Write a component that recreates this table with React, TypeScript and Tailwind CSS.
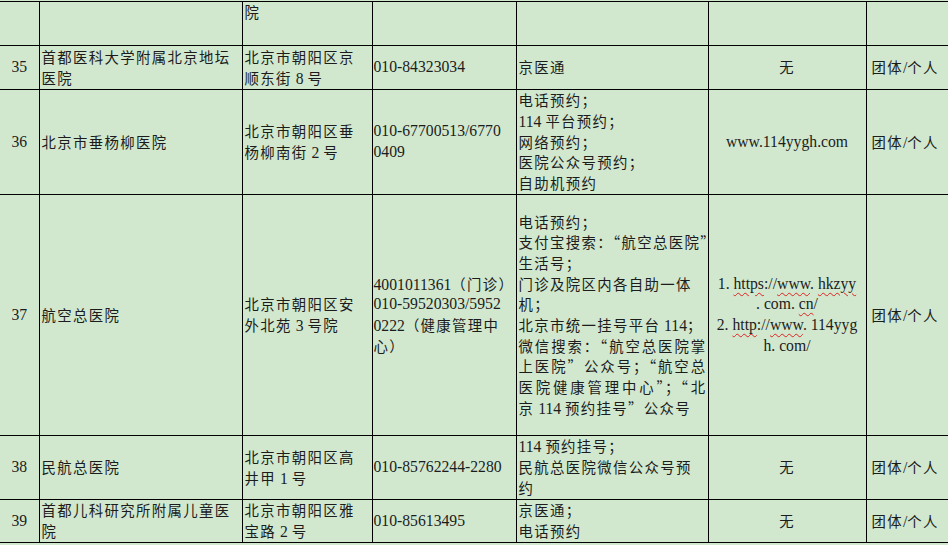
import React from 'react';

// CJK runs get their own font size + tracking so the glyph advance matches the doc (~15.75px)
const CJK = /([\u2E80-\u9FFF\u3000-\u303F\uFF00-\uFFEF\u2018-\u201D]+)/;

function T({ s }: { s: string }) {
  return (
    <>
      {s.split(CJK).map((p, i) =>
        CJK.test(p) ? (
          <span key={i} className="font-['Noto_Sans_CJK_SC',sans-serif] text-[14.4px] tracking-[1.35px]">
            {p}
          </span>
        ) : (
          <React.Fragment key={i}>{p}</React.Fragment>
        )
      )}
    </>
  );
}

function Line({ children, justify = false }: { children: React.ReactNode; justify?: boolean }) {
  return (
    <div className={justify ? 'h-[20.7px] whitespace-nowrap [text-align-last:justify]' : 'h-[20.7px] whitespace-nowrap'}>
      {children}
    </div>
  );
}

function Lines({ lines, justify = [] }: { lines: string[]; justify?: number[] }) {
  return (
    <>
      {lines.map((l, i) => (
        <Line key={i} justify={justify.includes(i)}>
          <T s={l} />
        </Line>
      ))}
    </>
  );
}

function Wavy({ children }: { children: React.ReactNode }) {
  return <span className="underline decoration-wavy decoration-[#e02020] decoration-1 underline-offset-[3px]">{children}</span>;
}

const td = 'border border-black align-middle p-0';

const rows = [
  {
    no: '35',
    name: ['首都医科大学附属北京地坛', '医院'],
    addr: ['北京市朝阳区京', '顺东街 8 号'],
    tel: ['010-84323034'],
    way: ['京医通'],
    web: '无',
    h: 'h-[44px]',
  },
  {
    no: '36',
    name: ['北京市垂杨柳医院'],
    addr: ['北京市朝阳区垂', '杨柳南街 2 号'],
    tel: ['010-67700513/6770', '0409'],
    way: ['电话预约；', '114 平台预约；', '网络预约；', '医院公众号预约；', '自助机预约'],
    web: 'www.114yygh.com',
    h: 'h-[105px]',
  },
];

const rowsB = [
  {
    no: '38',
    name: ['民航总医院'],
    addr: ['北京市朝阳区高', '井甲 1 号'],
    tel: ['010-85762244-2280'],
    way: ['114 预约挂号；', '民航总医院微信公众号预', '约'],
    web: '无',
    h: 'h-[64px]',
  },
  {
    no: '39',
    name: ['首都儿科研究所附属儿童医', '院'],
    addr: ['北京市朝阳区雅', '宝路 2 号'],
    tel: ['010-85613495'],
    way: ['京医通；', '电话预约'],
    web: '无',
    h: 'h-[43px]',
  },
];

type Row = (typeof rows)[number];

function PlainRow({ r }: { r: Row }) {
  return (
    <tr className={r.h}>
      <td className={`${td} border-l-0 text-center`}>
        <Line>{r.no}</Line>
      </td>
      <td className={`${td} pl-[2px]`}>
        <Lines lines={r.name} />
      </td>
      <td className={`${td} pl-[2px]`}>
        <Lines lines={r.addr} />
      </td>
      <td className={`${td} pl-px`}>
        <Lines lines={r.tel} />
      </td>
      <td className={`${td} pl-[2px]`}>
        <Lines lines={r.way} />
      </td>
      <td className={`${td} text-center`}>
        <Lines lines={[r.web]} />
      </td>
      <td className={`${td} border-r-0 pl-[5px]`}>
        <Lines lines={['团体/个人']} />
      </td>
    </tr>
  );
}

export default function App() {
  return (
    <div className="h-[545px] w-[948px] overflow-hidden bg-[#d1e8cf] pt-px">
      <table className="w-[956px] table-fixed border-collapse font-['Liberation_Serif','Noto_Sans_CJK_SC',serif] text-[15.7px] leading-[20.7px] text-[#1c1c1c]">
        <colgroup>
          <col className="w-[39px]" />
          <col className="w-[203px]" />
          <col className="w-[130px]" />
          <col className="w-[144px]" />
          <col className="w-[192px]" />
          <col className="w-[158px]" />
          <col className="w-[90px]" />
        </colgroup>
        <tbody>
          {/* tail of previous row continued from the last page */}
          <tr className="h-[44px]">
            <td className={`${td} border-l-0`} />
            <td className={td} />
            <td className={`${td} pl-[2px] align-top`}>
              <Lines lines={['院']} />
            </td>
            <td className={td} />
            <td className={td} />
            <td className={td} />
            <td className={`${td} border-r-0`} />
          </tr>

          {rows.map((r) => (
            <PlainRow key={r.no} r={r} />
          ))}

          <tr className="h-[241px]">
            <td className={`${td} border-l-0 text-center`}>
              <Line>37</Line>
            </td>
            <td className={`${td} pl-[2px]`}>
              <Lines lines={['航空总医院']} />
            </td>
            <td className={`${td} pl-[2px]`}>
              <Lines lines={['北京市朝阳区安', '外北苑 3 号院']} />
            </td>
            <td className={`${td} pl-px`}>
              <Lines lines={['4001011361（门诊）', '010-59520303/5952', '0222（健康管理中', '心）']} />
            </td>
            <td className={`${td} pl-[2px] pr-px`}>
              <Lines
                lines={[
                  '电话预约；',
                  '支付宝搜索：“航空总医院”',
                  '生活号；',
                  '门诊及院区内各自助一体',
                  '机；',
                  '北京市统一挂号平台 114；',
                  '微信搜索：“航空总医院掌',
                  '上医院”公众号；“航空总',
                  '医院健康管理中心”；“北',
                  '京 114 预约挂号”公众号',
                ]}
                justify={[1, 6, 7, 8]}
              />
            </td>
            <td className={`${td} text-center`}>
              <Line>
                1. <Wavy>https</Wavy>://<Wavy>www</Wavy>. <Wavy>hkzyy</Wavy>
              </Line>
              <Line>
                . com. <Wavy>cn</Wavy>/
              </Line>
              <Line>
                2. <Wavy>http</Wavy>://<Wavy>www</Wavy>. 114yyg
              </Line>
              <Line>h. com/</Line>
            </td>
            <td className={`${td} border-r-0 pl-[5px]`}>
              <Lines lines={['团体/个人']} />
            </td>
          </tr>

          {rowsB.map((r) => (
            <PlainRow key={r.no} r={r} />
          ))}
        </tbody>
      </table>
    </div>
  );
}
